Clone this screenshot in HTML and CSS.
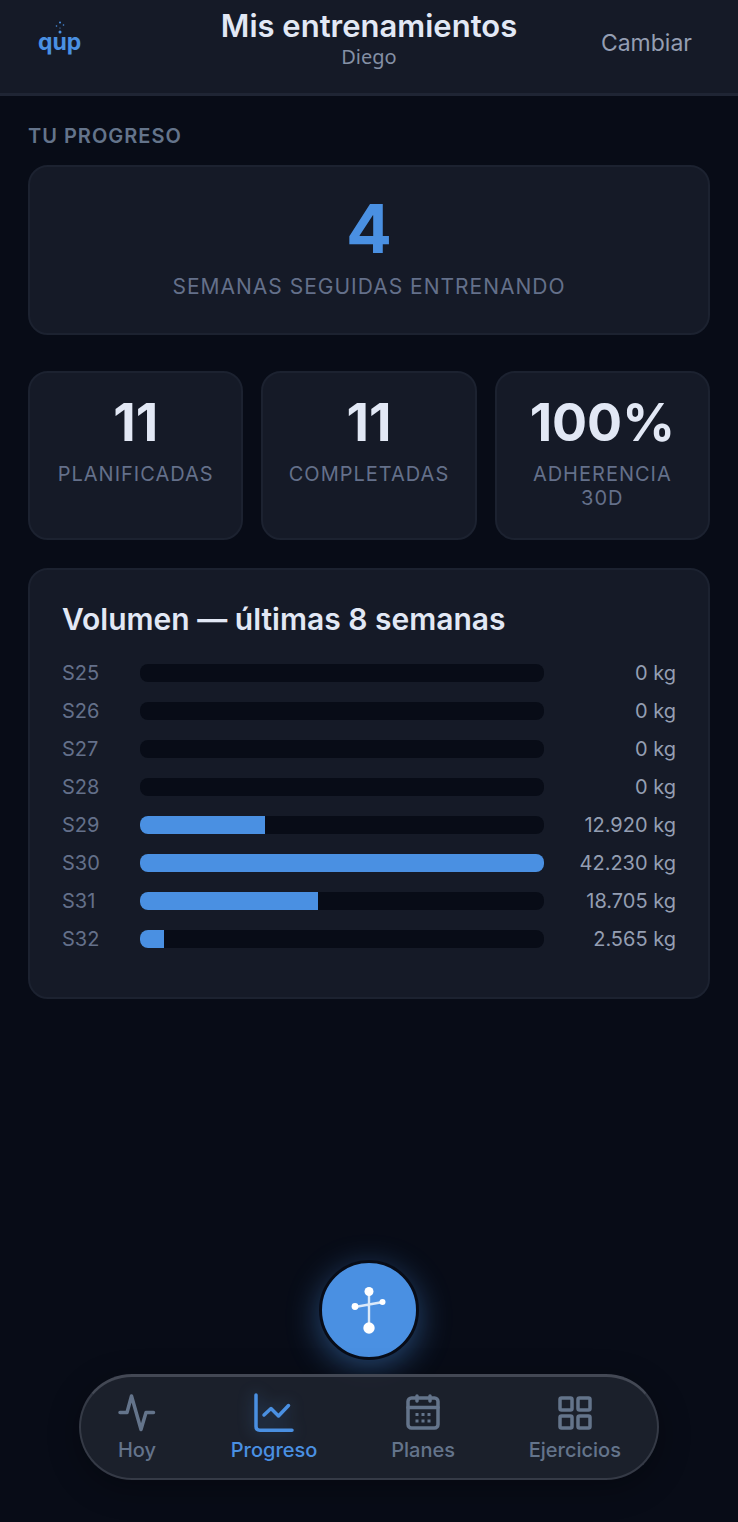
FILE: index.html
```html
<!DOCTYPE html>
<html lang="es">
<head>
  <meta charset="UTF-8">
  <meta name="viewport" content="width=device-width, initial-scale=1.0">
  <title>Mis entrenamientos</title>
  <link rel="stylesheet" href="styles.css">
</head>
<body>
  <header class="topbar">
    <a class="logo" href="#" aria-label="qup">
      <svg class="logo-dots" viewBox="0 0 10 14" aria-hidden="true">
        <circle cx="5" cy="2.5" r="1"/>
        <circle cx="1.5" cy="6" r=".8"/>
        <circle cx="8.5" cy="5" r=".8"/>
        <circle cx="5" cy="8" r=".6"/>
        <circle cx="5" cy="12" r="1.5"/>
      </svg>
      <span>qup</span>
    </a>
    <div class="topbar-text">
      <h1>Mis entrenamientos</h1>
      <p>Diego</p>
    </div>
    <button type="button" class="switch-btn">Cambiar</button>
  </header>

  <main class="content">
    <h2 class="section-title">Tu progreso</h2>

    <section class="card streak">
      <div class="streak-value">4</div>
      <div class="streak-label">Semanas seguidas entrenando</div>
    </section>

    <section class="stats">
      <div class="card stat">
        <div class="stat-value">11</div>
        <div class="stat-label">Planificadas</div>
      </div>
      <div class="card stat">
        <div class="stat-value">11</div>
        <div class="stat-label">Completadas</div>
      </div>
      <div class="card stat">
        <div class="stat-value">100%</div>
        <div class="stat-label">Adherencia 30d</div>
      </div>
    </section>

    <section class="card volume">
      <h3>Volumen — últimas 8 semanas</h3>
      <ul class="bars">
        <li><span class="week">S25</span><span class="track"></span><span class="kg">0 kg</span></li>
        <li><span class="week">S26</span><span class="track"></span><span class="kg">0 kg</span></li>
        <li><span class="week">S27</span><span class="track"></span><span class="kg">0 kg</span></li>
        <li><span class="week">S28</span><span class="track"></span><span class="kg">0 kg</span></li>
        <li><span class="week">S29</span><span class="track"><span class="fill" style="width: 31%"></span></span><span class="kg">12.920 kg</span></li>
        <li><span class="week">S30</span><span class="track"><span class="fill" style="width: 100%"></span></span><span class="kg">42.230 kg</span></li>
        <li><span class="week">S31</span><span class="track"><span class="fill" style="width: 44%"></span></span><span class="kg">18.705 kg</span></li>
        <li><span class="week">S32</span><span class="track"><span class="fill" style="width: 6%"></span></span><span class="kg">2.565 kg</span></li>
      </ul>
    </section>
  </main>

  <footer class="dock">
    <button type="button" class="fab" aria-label="Abrir asistente">
      <svg viewBox="0 0 48 56" aria-hidden="true">
        <path d="M24 9v38M10 25l28-5" fill="none" stroke="#fff" stroke-opacity=".8" stroke-width="2.4"/>
        <circle cx="24" cy="9.5" r="4.5"/>
        <circle cx="10" cy="24.5" r="3.4"/>
        <circle cx="37.5" cy="20" r="3"/>
        <circle cx="24" cy="46" r="5.7"/>
      </svg>
    </button>
    <nav class="tabs">
      <a href="#">
        <svg viewBox="0 0 40 40" aria-hidden="true"><path d="M3 20.500h7l4.500-16.500 9.500 33.500 5-17h7.500"/></svg>
        <span>Hoy</span>
      </a>
      <a href="#" class="active" aria-current="page">
        <svg viewBox="0 0 40 40" aria-hidden="true">
          <path d="M2 3v31.500q0 3.700 3.700 3.700H38"/>
          <path d="M10 23l7-6.500 7.500 7.500L34.500 13.500"/>
        </svg>
        <span>Progreso</span>
      </a>
      <a href="#">
        <svg viewBox="0 0 40 40" aria-hidden="true">
          <rect x="5" y="6" width="30" height="30" rx="3.500"/>
          <path d="M5 15.500h30M14 4v5M27 4v5"/>
          <path class="cal-dots" d="M12.500 22.500h3M18.500 22.500h3M24.500 22.500h3M12.500 29h3M18.500 29h3M24.500 29h3"/>
        </svg>
        <span>Planes</span>
      </a>
      <a href="#">
        <svg viewBox="0 0 40 40" aria-hidden="true">
          <rect x="5" y="6" width="12" height="12" rx="1.500"/>
          <rect x="23" y="6" width="12" height="12" rx="1.500"/>
          <rect x="5" y="24" width="12" height="12" rx="1.500"/>
          <rect x="23" y="24" width="12" height="12" rx="1.500"/>
        </svg>
        <span>Ejercicios</span>
      </a>
    </nav>
  </footer>
</body>
</html>
```
FILE: styles.css
```css
* {
  box-sizing: border-box;
}

body {
  margin: 0;
  min-height: 100vh;
  display: flex;
  flex-direction: column;
  font-family: Inter, "Liberation Sans", sans-serif;
  background: #080c17;
  color: #e2e8f5;
}

h1, h2, h3, p, ul {
  margin: 0;
  padding: 0;
}

button {
  font: inherit;
  border: none;
  cursor: pointer;
}

/* header */
.topbar {
  display: grid;
  grid-template-columns: 1fr auto 1fr;
  align-items: center;
  padding: 8px 38px 23px;
  background: #151a27;
  border-bottom: 3px solid #1f2534;
}

.logo {
  justify-self: start;
  display: flex;
  flex-direction: column;
  align-items: center;
  padding-bottom: 8px;
  color: #4a90e2;
  font-size: 23px;
  font-weight: 700;
  line-height: 16px;
  text-decoration: none;
}

.logo-dots {
  width: 10px;
  height: 14px;
  fill: #4a90e2;
}

.topbar-text {
  text-align: center;
}

.topbar h1 {
  font-size: 31px;
  font-weight: 600;
  line-height: 36px;
}

.topbar p {
  font-family: "Noto Sans", sans-serif;
  font-size: 20px;
  line-height: 26px;
  color: #8490a5;
}

.switch-btn {
  justify-self: end;
  padding: 16px 8px 8px;
  font-size: 23px;
  background: none;
  color: #949eb2;
}

/* content */
.content {
  flex: 1;
  padding: 26px 28px;
}

.section-title {
  margin-bottom: 15px;
  font-size: 20px;
  font-weight: 600;
  line-height: 28px;
  letter-spacing: 1px;
  text-transform: uppercase;
  color: #64748b;
}

.card {
  background: #151a27;
  border: 2px solid #1c2230;
  border-radius: 20px;
}

.streak {
  padding: 23px 24px 30px;
  margin-bottom: 36px;
  text-align: center;
}

.streak-value {
  font-size: 68px;
  font-weight: 700;
  line-height: 76px;
  color: #4a90e2;
}

.streak-label {
  padding-top: 5px;
  font-size: 21px;
  line-height: 32px;
  letter-spacing: 1px;
  text-transform: uppercase;
  color: #64708a;
}

.stats {
  display: grid;
  grid-template-columns: repeat(3, minmax(0, 1fr));
  gap: 18px;
  margin-bottom: 28px;
}

.stat {
  padding: 22px 24px 28px;
  text-align: center;
}

.stat-value {
  font-size: 52px;
  font-weight: 700;
  line-height: 56px;
}

.stat-label {
  padding-top: 11px;
  font-size: 20px;
  line-height: 24px;
  letter-spacing: 1px;
  text-transform: uppercase;
  color: #64708a;
}

.volume {
  padding: 31px 32px 49px;
}

.volume h3 {
  margin-bottom: 27px;
  font-size: 30px;
  font-weight: 600;
  line-height: 36px;
}

.bars {
  display: grid;
  gap: 20px;
  list-style: none;
}

.bars li {
  display: grid;
  grid-template-columns: 60px 1fr 114px;
  align-items: center;
  gap: 18px;
  font-size: 20px;
  line-height: 18px;
}

.week {
  color: #64708a;
}

.track {
  height: 18px;
  border-radius: 8px;
  background: #080c17;
  overflow: hidden;
}

.fill {
  display: block;
  height: 100%;
  background: #4a90e2;
}

.kg {
  text-align: right;
  color: #949eb2;
}

/* bottom dock */
.dock {
  display: flex;
  flex-direction: column;
  align-items: center;
  gap: 14px;
  padding: 0 79px 42px;
}

.fab {
  display: flex;
  align-items: center;
  justify-content: center;
  width: 100px;
  height: 100px;
  border: 3px solid #080c17;
  border-radius: 50%;
  background: #4a90e2;
  box-shadow: 0 8px 32px rgba(74, 144, 226, 0.45);
}

.fab svg {
  width: 48px;
  height: 56px;
  fill: #fff;
}

.tabs {
  z-index: 1;
  display: flex;
  justify-content: space-between;
  width: 100%;
  padding: 15px 36px 13px;
  border: 2px solid #353a46;
  border-top: 3px solid #434854;
  border-radius: 53px;
  background: #1e222de6;
  box-shadow: 0 8px 32px rgba(0, 0, 0, 0.3);
}

.tabs a {
  display: flex;
  flex-direction: column;
  align-items: center;
  gap: 3px;
  font-size: 20px;
  font-weight: 500;
  line-height: 30px;
  color: #64748b;
  text-decoration: none;
}

.tabs svg {
  width: 40px;
  height: 40px;
  fill: none;
  stroke: currentColor;
  stroke-width: 3.5;
  stroke-linecap: round;
  stroke-linejoin: round;
}

.tabs .cal-dots {
  stroke-width: 3;
  stroke-linecap: butt;
}

.tabs .active {
  color: #4a90e2;
}

.active svg {
  filter: drop-shadow(0 0 8px rgba(74, 144, 226, 0.4));
}

@media (max-width: 600px) {
  .dock {
    padding: 0 20px 24px;
  }

  .stat {
    padding: 20px 12px;
  }
}
```
